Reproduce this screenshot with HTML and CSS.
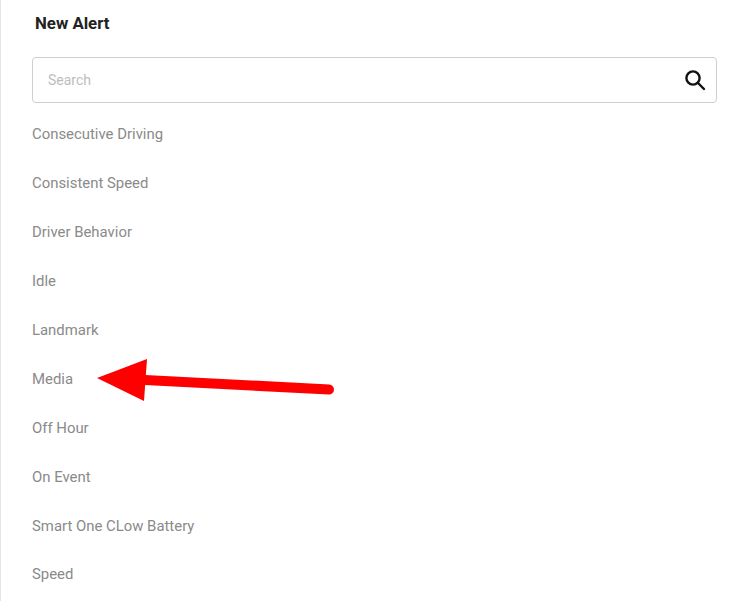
FILE: index.html
```html
<!DOCTYPE html>
<html lang="en">
<head>
<meta charset="utf-8">
<title>New Alert</title>
<link rel="stylesheet" href="styles.css">
</head>
<body>
<main class="panel">
  <h1 class="title">New Alert</h1>
  <div class="search">
    <span class="placeholder">Search</span>
    <svg class="search-icon" width="24" height="24" viewBox="0 0 24 24" fill="none" stroke="#111" stroke-width="2.4" stroke-linecap="round"><circle cx="10" cy="10" r="6.6"/><path d="M15 15l6 6"/></svg>
  </div>
  <ul class="list">
    <li>Consecutive Driving</li>
    <li>Consistent Speed</li>
    <li>Driver Behavior</li>
    <li>Idle</li>
    <li>Landmark</li>
    <li>Media</li>
    <li>Off Hour</li>
    <li>On Event</li>
    <li>Smart One CLow Battery</li>
    <li>Speed</li>
  </ul>
  <svg class="arrow" width="240" height="44" viewBox="0 0 240 44">
    <path d="M50 21L234 30.5" stroke="#fe0000" stroke-width="10" stroke-linecap="round" fill="none"/>
    <path d="M2 19L52 0L49 42Z" fill="#fe0000"/>
  </svg>
</main>
</body>
</html>
```
FILE: styles.css
```css
html, body {
  margin: 0;
  height: 100%;
  background: #fff;
}
body {
  overflow: hidden;
  font-family: Roboto, "Liberation Sans", sans-serif;
}
.panel {
  position: relative;
  box-sizing: border-box;
  height: 601px;
  padding: 0 23px 0 32px;
  border-left: 1px solid #e4e4e4;
}
.title {
  margin: 0;
  padding: 13px 0 0 2px;
  font-size: 16.8px;
  line-height: 20px;
  font-weight: 700;
  color: #222;
}
.search {
  box-sizing: border-box;
  display: flex;
  align-items: center;
  justify-content: space-between;
  height: 46px;
  margin: 24px 0 0 -1px;
  padding: 0 9px 0 15px;
  border: 1px solid #cfcfcf;
  border-radius: 4px;
}
.placeholder {
  font-size: 14px;
  color: #bdbdbd;
}
.list {
  list-style: none;
  margin: 7.4px 0 0 -1px;
  padding: 0;
}
.list li {
  height: 48.9px;
  line-height: 48.9px;
  font-size: 14.9px;
  color: #8a8a8a;
}
.arrow {
  position: absolute;
  left: 94px;
  top: 359px;
}
```
